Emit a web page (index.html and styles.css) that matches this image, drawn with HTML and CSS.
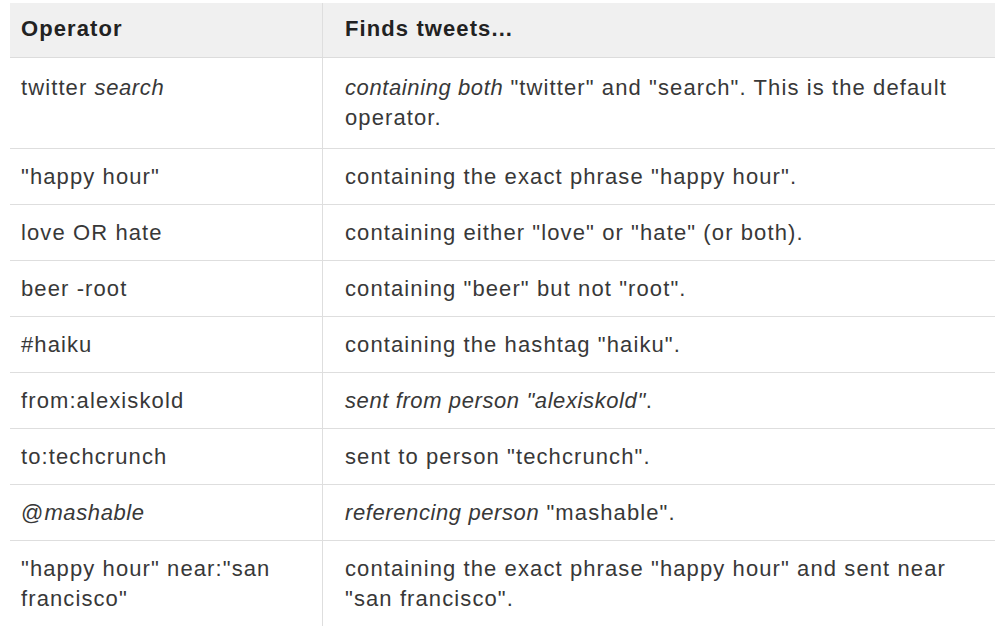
FILE: index.html
```html
<!DOCTYPE html>
<html>
<head>
<meta charset="utf-8">
<link rel="stylesheet" href="styles.css">
</head>
<body>
<table class="ops">
  <thead>
    <tr><th class="c1">Operator</th><th class="c2">Finds tweets...</th></tr>
  </thead>
  <tbody>
    <tr class="tall"><td class="c1">twitter <em>search</em></td><td class="c2"><em>containing both</em> "twitter" and "search". This is the default operator.</td></tr>
    <tr><td class="c1">"happy hour"</td><td class="c2">containing the exact phrase "happy hour".</td></tr>
    <tr><td class="c1">love OR hate</td><td class="c2">containing either "love" or "hate" (or both).</td></tr>
    <tr><td class="c1">beer -root</td><td class="c2">containing "beer" but not "root".</td></tr>
    <tr><td class="c1">#haiku</td><td class="c2">containing the hashtag "haiku".</td></tr>
    <tr><td class="c1">from:alexiskold</td><td class="c2"><em>sent from person "alexiskold"</em>.</td></tr>
    <tr><td class="c1">to:techcrunch</td><td class="c2">sent to person "techcrunch".</td></tr>
    <tr><td class="c1">@<em>mashable</em></td><td class="c2"><em>referencing person</em> "mashable".</td></tr>
    <tr class="last"><td class="c1">"happy hour" near:"san francisco"</td><td class="c2">containing the exact phrase "happy hour" and sent near "san francisco".</td></tr>
  </tbody>
</table>
</body>
</html>
```
FILE: styles.css
```css
html, body {
  margin: 0;
  padding: 0;
  background: #ffffff;
}
body {
  padding: 3px 5px 0 10px;
  font-family: "Liberation Sans", Arial, sans-serif;
  color: #383838;
}
.ops {
  width: 985px;
  border-collapse: collapse;
  table-layout: fixed;
}
.ops th, .ops td {
  text-align: left;
  vertical-align: top;
  line-height: 30px;
  font-size: 22px;
  letter-spacing: 1.1px;
  padding: 13px 14px 12px 14px;
}
.ops th {
  background: #f0f0f0;
  color: #222222;
  font-weight: bold;
  padding-top: 11px;
  padding-bottom: 13px;
  border-bottom: 1px solid #dcdcdc;
}
.ops .c1 {
  width: 287px;
  padding-left: 11px;
}
.ops .c2 {
  padding-left: 22px;
  border-left: 1px solid #dedede;
}
.ops td {
  border-bottom: 1px solid #dedede;
}
.ops tr.tall td {
  padding-top: 15px;
  padding-bottom: 15px;
}
.ops tr.last td {
  border-bottom: none;
}
.ops em {
  font-style: italic;
  letter-spacing: 0.6px;
}
```
